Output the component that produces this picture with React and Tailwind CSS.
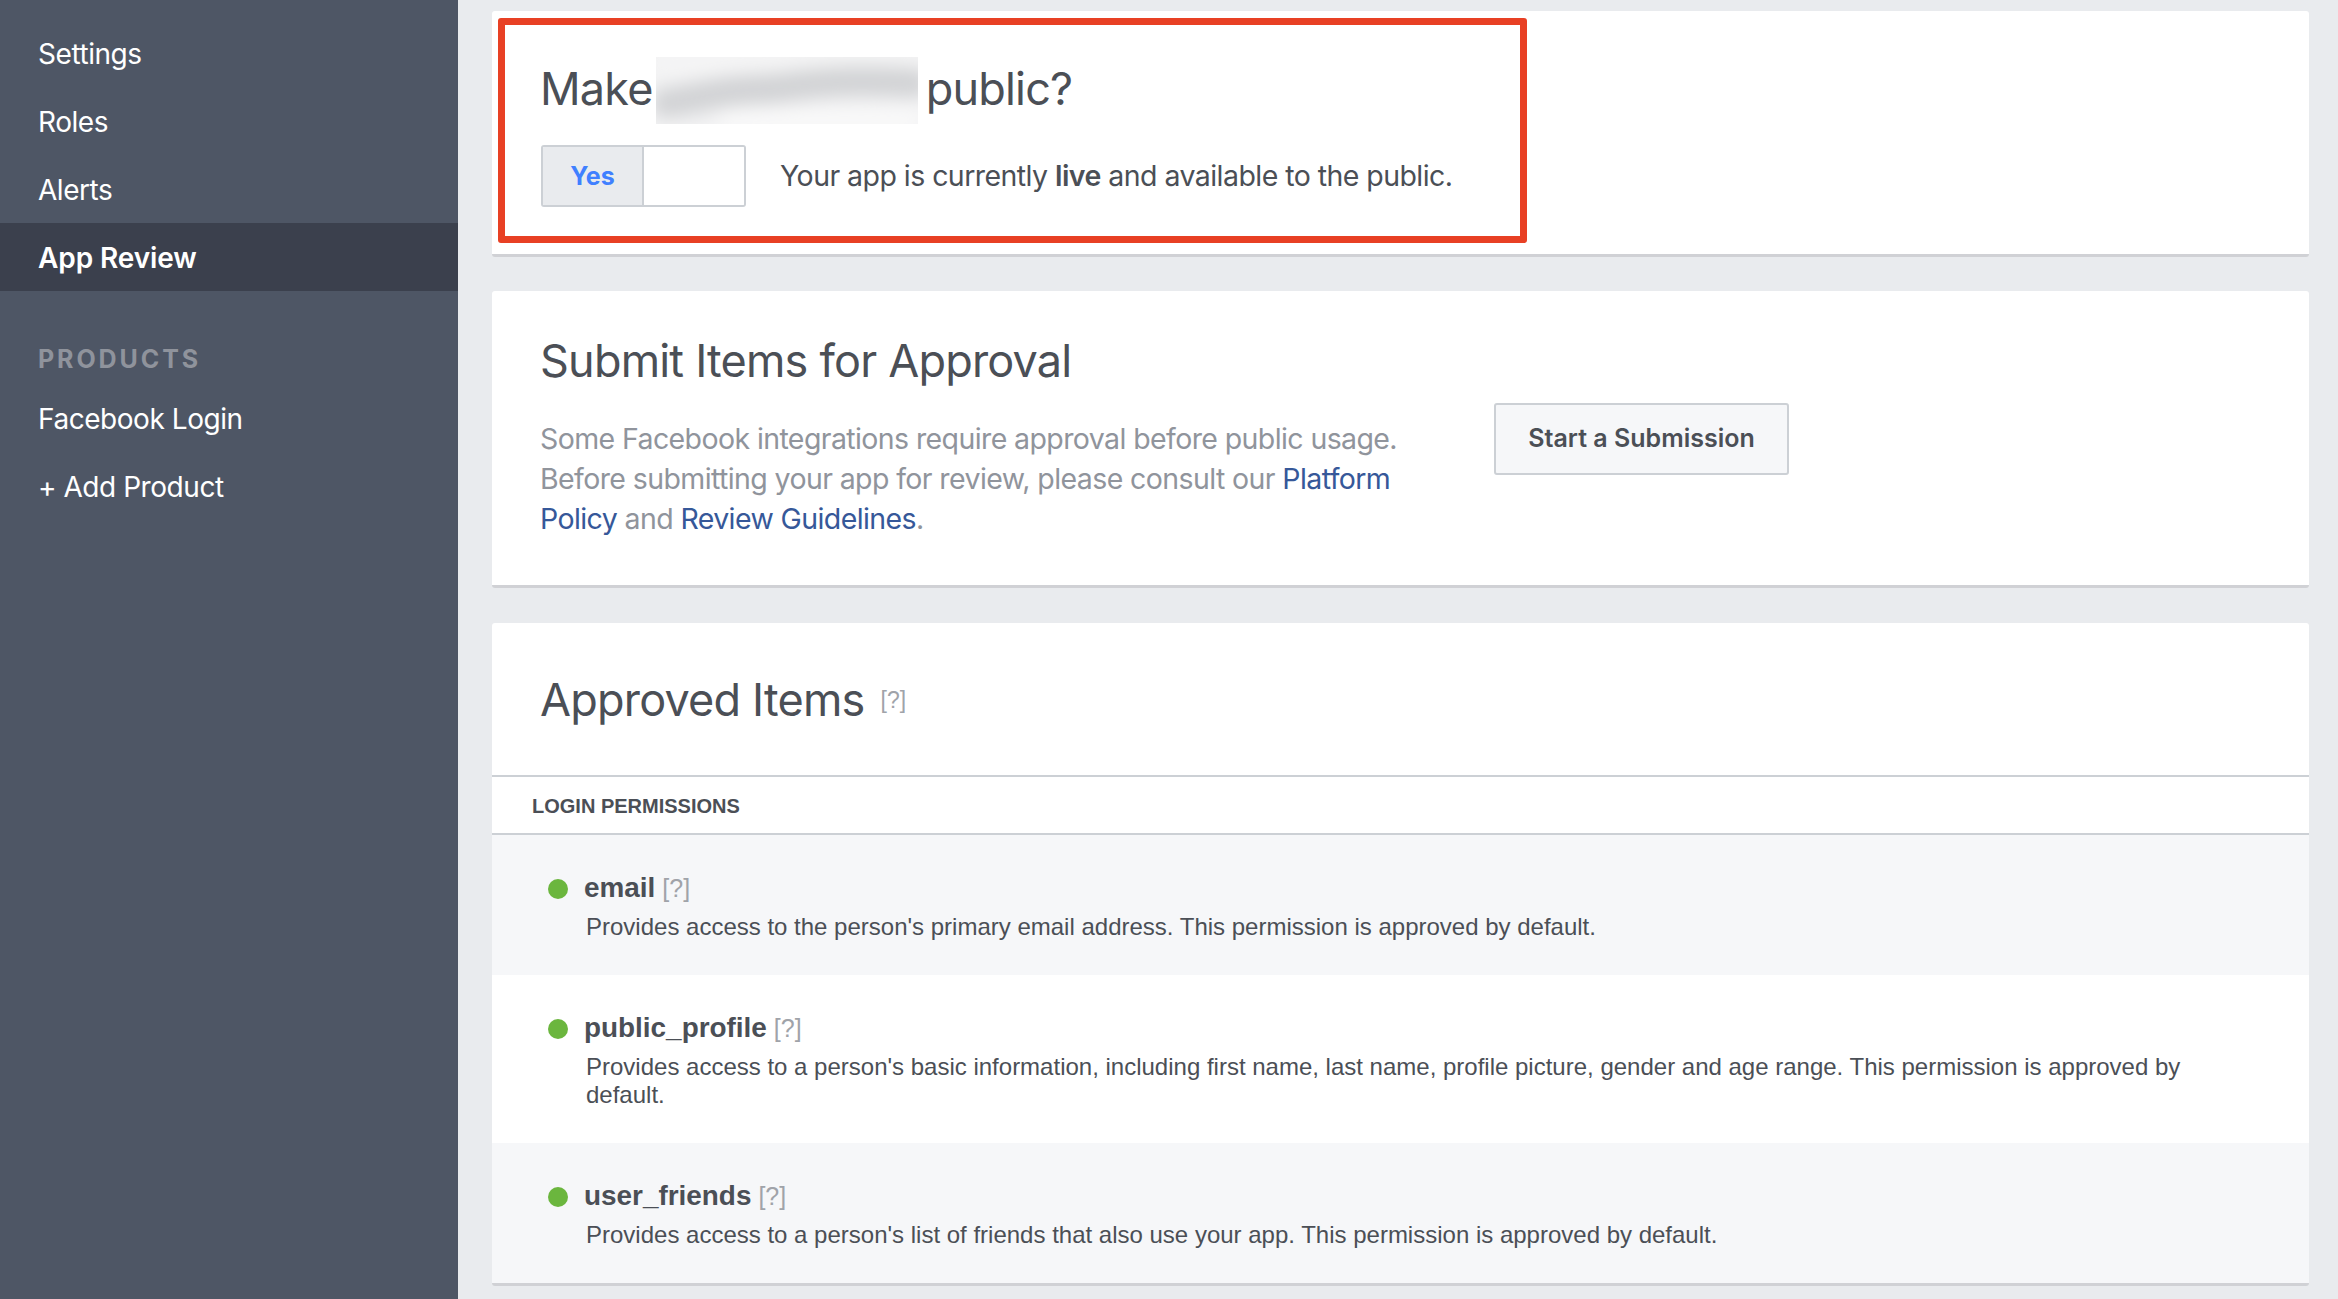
import React from 'react';

const ui = "font-['Inter',sans-serif]";
const helv = "font-['Liberation_Sans',Arial,sans-serif]";

const SideItem = ({ label, active }) => (
  <div className={`h-[68px] flex items-center pl-[38px] text-[28px] ${active ? 'bg-[#3b404d] font-semibold text-white tracking-[-0.1px]' : 'text-white tracking-[-0.45px]'}`}>
    <span className="mt-[1px]">{label}</span>
  </div>
);

const Sidebar = () => (
  <aside className={`w-[458px] shrink-0 bg-[#4e5665] pt-[19px] ${ui}`}>
    <SideItem label="Settings" />
    <SideItem label="Roles" />
    <SideItem label="Alerts" />
    <SideItem label="App Review" active />
    <div className="h-[93px] pt-[55px] pl-[38px] text-[25px] leading-[26px] font-bold tracking-[2.9px] text-[#8f939c]">PRODUCTS</div>
    <SideItem label="Facebook Login" />
    <SideItem label="+ Add Product" />
  </aside>
);

// blurred out app name
const BlurredName = () => (
  <svg width="262" height="67" viewBox="0 0 262 67" className="shrink-0 ml-[3px] mr-[8px]">
    <defs>
      <filter id="smear" x="-20%" y="-50%" width="140%" height="200%">
        <feGaussianBlur stdDeviation="9" />
      </filter>
      <clipPath id="nameBox">
        <rect width="262" height="67" />
      </clipPath>
    </defs>
    <g clipPath="url(#nameBox)">
      <rect width="262" height="67" fill="#f3f3f4" />
      <g filter="url(#smear)" fill="none" strokeLinecap="round">
        <path d="M4 6 H258" stroke="#f7f7f7" strokeWidth="8" />
        <path d="M10 46 C40 42 70 32 110 32 C140 30 170 20 258 26" stroke="#d2d3d5" strokeWidth="30" />
        <path d="M70 64 C120 62 190 64 258 62" stroke="#fcfcfc" strokeWidth="14" />
      </g>
    </g>
  </svg>
);

const Hint = ({ className }) => <span className={`text-[#a0a3a9] ${helv} ${className}`}>[?]</span>;

const Permission = ({ name, children, shaded }) => (
  <div className={`${shaded ? 'bg-[#f6f7f9]' : 'bg-white'} pl-[56px] pr-[60px] pt-[40px] pb-[34px] ${helv}`}>
    <div className="flex items-center h-[28px]">
      <span className="w-[20px] h-[20px] rounded-full bg-[#6bb63e] shrink-0" />
      <span className="ml-[16px] -mt-[2px] text-[27.9px] font-bold text-[#4b4f56] leading-[28px]">{name}</span>
      <Hint className="ml-[7px] -mt-[2px] text-[25px] leading-[28px]" />
    </div>
    <p className="ml-[38px] mt-[10px] text-[24px] leading-[28px] text-[#4b4f56]">{children}</p>
  </div>
);

const App = () => {
  return (
    <div className="flex h-[1299px] overflow-hidden bg-[#e9ebee]">
      <Sidebar />
      <main className={`flex-1 pl-[34px] pr-[29px] pt-[11px] ${ui}`}>
        {/* Make public */}
        <section className="h-[246px] bg-white rounded-[3px] border-b-[3px] border-[#d0d1d5] pt-[7px] pl-[6px]">
          <div className="w-[1029px] h-[225px] border-[7px] border-[#e84024] rounded-[3px] pl-[36px] pt-[32px]">
            <h2 className="flex items-center h-[67px] -ml-[1px] text-[45px] leading-[60px] tracking-[-0.8px] font-normal text-[#4b4f56]">
              <span className="-mt-[3px]">Make</span>
              <BlurredName />
              <span className="-mt-[3px]">public?</span>
            </h2>
            <div className="flex items-center mt-[21px]">
              <div className="flex w-[205px] h-[62px] border-2 border-[#ccd0d5] rounded-[3px] overflow-hidden">
                <div className="w-[101px] pt-[2px] bg-[#e9ebee] border-r-2 border-[#ccd0d5] flex items-center justify-center text-[25px] font-bold text-[#4080ff]">Yes</div>
                <div className="flex-1 bg-white" />
              </div>
              <p className="ml-[34px] text-[28.5px] tracking-[-0.55px] text-[#4b4f56]">
                Your app is currently <b className="font-semibold">live</b> and available to the public.
              </p>
            </div>
          </div>
        </section>

        {/* Submit */}
        <section className="mt-[34px] h-[297px] bg-white rounded-[3px] border-b-[3px] border-[#d0d1d5] pl-[48px] pt-[44px]">
          <h2 className="text-[45px] leading-[52px] tracking-[-0.8px] font-normal text-[#4b4f56]">Submit Items for Approval</h2>
          <div className="flex items-start mt-[12px]">
            <p className="w-[880px] pt-[20px] text-[28.5px] leading-[40px] tracking-[-0.6px] text-[#90949c]">
              Some Facebook integrations require approval before public usage.<br />
              Before submitting your app for review, please consult our <a className="text-[#365899]">Platform</a> <a className="text-[#365899]">Policy</a> and <a className="text-[#365899]">Review Guidelines</a>.
            </p>
            <button className="mt-[4px] ml-[74px] w-[295px] h-[72px] bg-[#f6f7f9] border-2 border-[#ccd0d5] rounded-[3px] text-[25px] font-semibold text-[#4b4f56]">Start a Submission</button>
          </div>
        </section>

        {/* Approved */}
        <section className="mt-[35px] bg-white rounded-[3px] border-b-[3px] border-[#d0d1d5] overflow-hidden">
          <div className="h-[154px] flex items-center pl-[48px] pt-[2px] border-b-2 border-[#ccd0d5]">
            <h2 className="text-[45px] tracking-[-0.8px] font-normal text-[#4b4f56]">Approved Items</h2>
            <Hint className="ml-[16px] text-[23px]" />
          </div>
          <div className={`h-[58px] flex items-center pl-[40px] pt-[2px] border-b-2 border-[#ccd0d5] text-[20px] font-bold text-[#4b4f56] ${helv}`}>LOGIN PERMISSIONS</div>
          <Permission name="email" shaded>
            Provides access to the person's primary email address. This permission is approved by default.
          </Permission>
          <Permission name="public_profile">
            Provides access to a person's basic information, including first name, last name, profile picture, gender and age range. This permission is approved by default.
          </Permission>
          <Permission name="user_friends" shaded>
            Provides access to a person's list of friends that also use your app. This permission is approved by default.
          </Permission>
        </section>
      </main>
    </div>
  );
};

export default App;
